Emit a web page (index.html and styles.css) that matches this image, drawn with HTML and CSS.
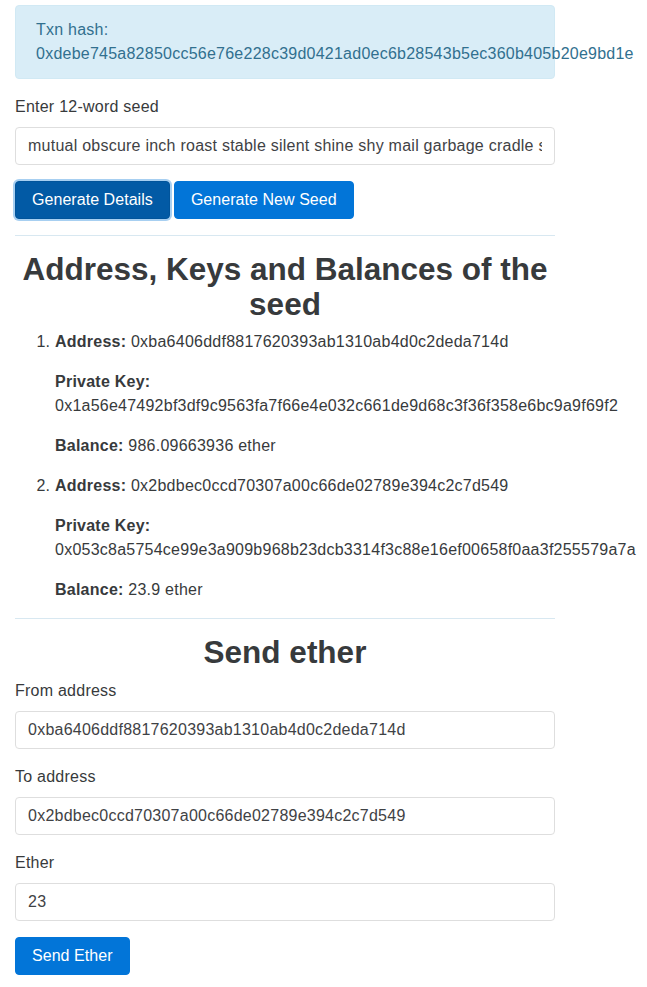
FILE: index.html
```html
<!DOCTYPE html>
<html lang="en">
<head>
<meta charset="utf-8">
<title>Wallet</title>
<link rel="stylesheet" href="styles.css">
</head>
<body>
<div class="container">
  <div class="alert">Txn hash: 0xdebe745a82850cc56e76e228c39d0421ad0ec6b28543b5ec360b405b20e9bd1e</div>

  <div class="form-group">
    <label class="label">Enter 12-word seed</label>
    <input class="form-control" type="text" value="mutual obscure inch roast stable silent shine shy mail garbage cradle shop">
  </div>
  <div class="btn-row">
    <button class="btn btn-active">Generate Details</button>
    <button class="btn">Generate New Seed</button>
  </div>

  <hr class="divider">

  <h2 class="heading">Address, Keys and Balances of the seed</h2>
  <ol class="accounts">
    <li>
      <p><strong>Address:</strong> 0xba6406ddf8817620393ab1310ab4d0c2deda714d</p>
      <p><strong>Private Key:</strong> 0x1a56e47492bf3df9c9563fa7f66e4e032c661de9d68c3f36f358e6bc9a9f69f2</p>
      <p><strong>Balance:</strong> 986.09663936 ether</p>
    </li>
    <li>
      <p><strong>Address:</strong> 0x2bdbec0ccd70307a00c66de02789e394c2c7d549</p>
      <p><strong>Private Key:</strong> 0x053c8a5754ce99e3a909b968b23dcb3314f3c88e16ef00658f0aa3f255579a7a</p>
      <p><strong>Balance:</strong> 23.9 ether</p>
    </li>
  </ol>

  <hr class="divider">

  <h2 class="heading">Send ether</h2>
  <div class="form-group">
    <label class="label">From address</label>
    <input class="form-control" type="text" value="0xba6406ddf8817620393ab1310ab4d0c2deda714d">
  </div>
  <div class="form-group">
    <label class="label">To address</label>
    <input class="form-control" type="text" value="0x2bdbec0ccd70307a00c66de02789e394c2c7d549">
  </div>
  <div class="form-group">
    <label class="label">Ether</label>
    <input class="form-control" type="text" value="23">
  </div>
  <button class="btn">Send Ether</button>
</div>
</body>
</html>
```

FILE: styles.css
```css
html, body {
  margin: 0;
  padding: 0;
  background: #fff;
}
body {
  font-family: "Liberation Sans", Arial, sans-serif;
  font-size: 16px;
  line-height: 1.5;
  letter-spacing: 0.24px;
  color: #373a3c;
}
.container {
  width: 540px;
  padding: 5px 15px 0 15px;
}
.alert {
  background: #d9edf7;
  border: 1px solid #d1e9f4;
  border-radius: 4px;
  color: #31708f;
  padding: 12px 20px;
  margin-bottom: 16px;
}
.form-group {
  margin-bottom: 16px;
}
.label {
  display: block;
  margin-bottom: 8px;
}
.form-control {
  display: block;
  box-sizing: border-box;
  width: 100%;
  height: 38px;
  padding: 8px 12px;
  font-family: inherit;
  font-size: 16px;
  letter-spacing: 0.24px;
  line-height: 1.25;
  color: #3f4245;
  background: #fff;
  border: 1px solid #dedede;
  border-radius: 4px;
  margin: 0;
}
.btn-row {
  display: flex;
  gap: 4px;
}
.btn {
  display: inline-block;
  font-family: inherit;
  font-size: 16px;
  letter-spacing: 0.05px;
  line-height: 1.25;
  padding: 8px 16px;
  height: 38px;
  color: #fff;
  background: #0275d8;
  border: 1px solid #0275d8;
  border-radius: 4px;
  margin: 0;
}
.btn-active {
  background: #025aa5;
  border-color: #01549b;
  box-shadow: 0 0 0 2px rgba(2, 117, 216, 0.35);
}
.divider {
  border: 0;
  border-top: 1px solid #d8e8f1;
  margin: 16px 0;
}
.heading {
  font-size: 31.5px;
  font-weight: bold;
  letter-spacing: 0;
  line-height: 35.2px;
  text-align: center;
  margin: 0 0 8px 0;
  color: #373a3c;
}
.accounts {
  margin: 0 0 16px 0;
  padding-left: 40px;
}
.accounts p {
  margin: 0 0 16px 0;
}
```
